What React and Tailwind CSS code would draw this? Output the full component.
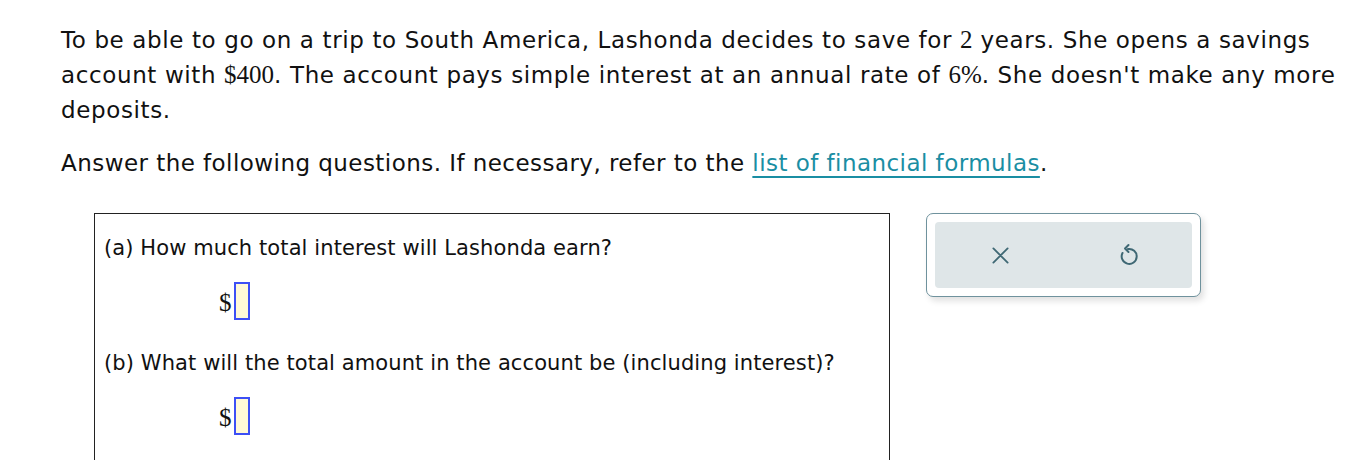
import React from 'react';

const M = ({ children }) => (
  <span className="font-['Liberation_Serif',serif] text-[25px] leading-none tracking-normal">{children}</span>
);

const Answer = ({ top }) => (
  <div className={`flex items-center pl-[115px] h-[38px] ${top}`}>
    <span className="font-['Liberation_Serif',serif] text-[25px] leading-none mt-[3px]">$</span>
    <span className="ml-[2px] w-[16px] h-[38px] bg-[#fff9d7] border-2 border-[#3d4ff5]" />
  </div>
);

export default function App() {
  return (
    <div className="w-[1362px] h-[460px] overflow-hidden bg-white font-['DejaVu_Sans',sans-serif] text-[#111]">
      <div className="pl-[61px] pt-[23px] text-[23px] leading-[35px] tracking-[0.62px] whitespace-nowrap">
        <p>To be able to go on a trip to South America, Lashonda decides to save for <M>2</M> years. She opens a savings</p>
        <p>account with <M>$400</M>. The account pays simple interest at an annual rate of <M>6%</M>. She doesn't make any more</p>
        <p>deposits.</p>
        <p className="mt-[18px] tracking-[0.45px]">
          Answer the following questions. If necessary, refer to the{' '}
          <a href="#" className="text-[#1a8ea3] underline underline-offset-[5px] decoration-[1.5px]">list of financial formulas</a>.
        </p>
      </div>

      <div className="flex items-start mt-[32px] pl-[94px]">
        <div className="w-[796px] h-[260px] border border-[#222] border-b-0 pl-[9px] pt-[21px] text-[21px] leading-[26px] tracking-[0.1px]">
          <p>(a) How much total interest will Lashonda earn?</p>
          <Answer top="mt-[21px]" />
          <p className="mt-[30px]">(b) What will the total amount in the account be (including interest)?</p>
          <Answer top="mt-[21px]" />
        </div>

        <div className="ml-[36px] w-[275px] h-[84px] rounded-[7px] border border-[#6f929d] bg-white p-[8px] shadow-[3px_4px_6px_rgba(0,0,0,0.12)]">
          <div className="h-full rounded-[4px] bg-[#dfe6e8] flex items-center">
            <svg className="ml-[56px]" width="19" height="19" viewBox="0 0 24 24" fill="none" stroke="#3f6874" strokeWidth="2.3" strokeLinecap="round">
              <path d="M3 3 L21 21 M21 3 L3 21" />
            </svg>
            <svg className="ml-[106px]" width="24" height="24" viewBox="0 0 24 24" fill="none" stroke="#3f6874" strokeWidth="2" strokeLinecap="round" strokeLinejoin="round">
              <path d="M6.5 10 A7.5 7.5 0 1 0 12 6" />
              <path d="M12.5 2 L9 5.5 L12.5 9" />
            </svg>
          </div>
        </div>
      </div>
    </div>
  );
}
